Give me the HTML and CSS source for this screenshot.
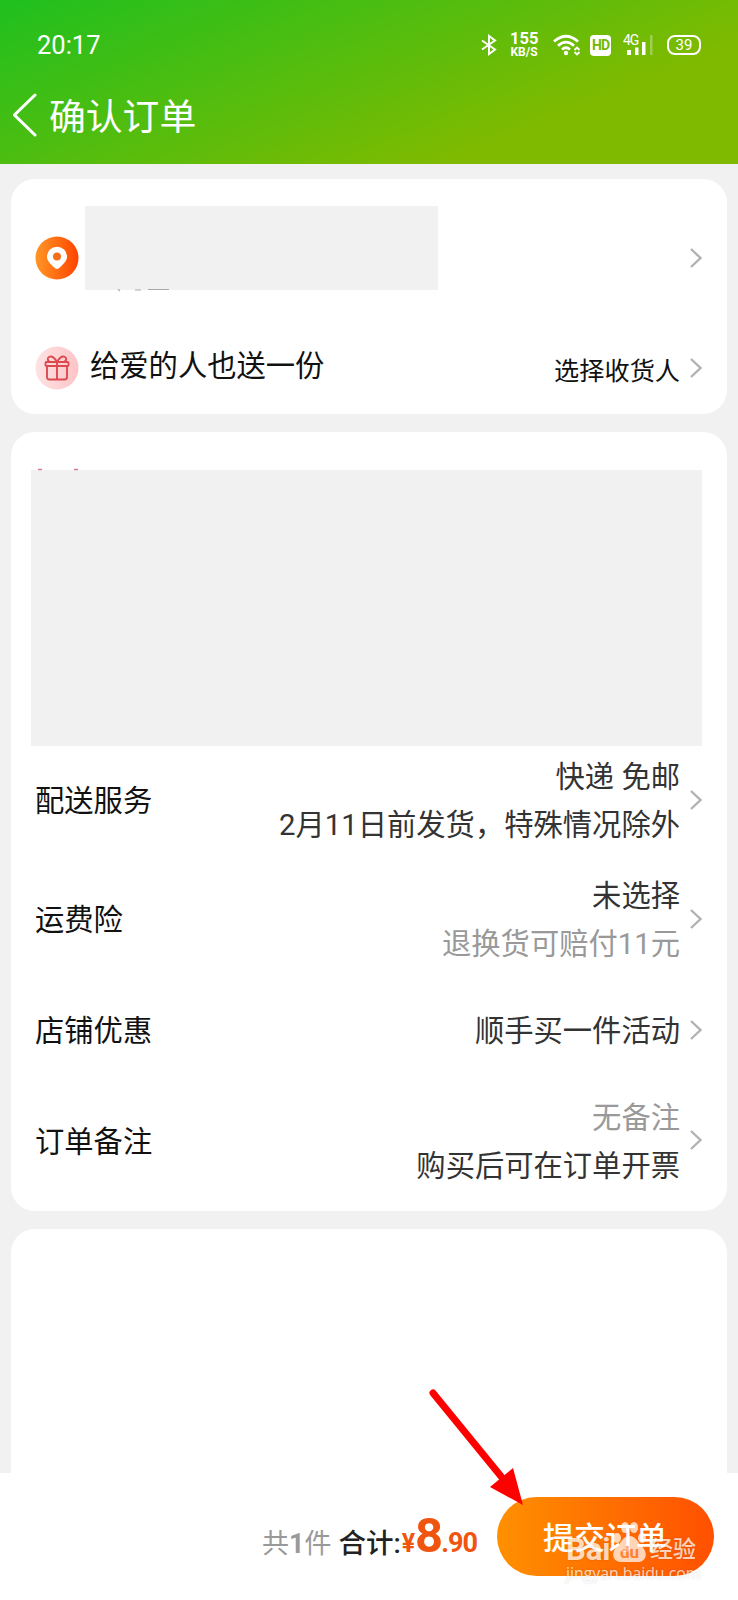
FILE: index.html
```html
<!DOCTYPE html>
<html lang="zh-CN">
<head>
    <meta charset="UTF-8">
    <meta name="viewport" content="width=device-width, initial-scale=1.0">
    <title>确认订单</title>
    <link rel="stylesheet" href="styles.css">
</head>
<body>
    <div class="page">
        <header class="header">
            <div class="status-bar">
                <span class="time">20:17</span>
                <div class="status-icons">
                    <svg class="bluetooth" width="16" height="22" viewBox="0 0 16 22" fill="none" stroke="#fff" stroke-width="2"><path d="M1 6.500l13 9-6 4.500V2L14 6.500 1 15.500"/></svg>
                    <div class="speed"><b>155</b><small>KB/S</small></div>
                    <svg class="wifi" width="28" height="22" viewBox="0 0 28 22" fill="none" stroke="#fff" stroke-width="2.800">
                        <path d="M1 7.500Q13 -3 25 7.500M5 11.800Q13 4.500 21 11.800M9 15.500Q13 12 17 15.500"/>
                        <circle cx="13" cy="19" r="2.200" fill="#fff" stroke="none"/>
                        <path d="M21.500 16l2.500-2.500 2.500 2.500M21.500 18l2.500 2.500 2.500-2.500" stroke-width="1.800"/>
                    </svg>
                    <span class="hd">HD</span>
                    <svg class="signal" width="31" height="26" viewBox="0 -2 31 26">
                        <text x="0" y="10.500" class="signal-text">4G</text>
                        <path d="M4 16h4v5H4zM12 13.500h3.500V21H12zM19 8h3.500v13H19z" fill="#fff"/>
                        <path d="M27 1h2.500v20H27z" fill="#fff" opacity=".3"/>
                    </svg>
                    <span class="battery">39</span>
                </div>
            </div>
            <div class="nav">
                <svg width="24" height="44" viewBox="0 0 24 44" fill="none" stroke="#fff" stroke-width="3" stroke-linecap="round"><path d="M22 2L1.500 22 22 42"/></svg>
                <h1>确认订单</h1>
            </div>
        </header>

        <main class="content">
            <section class="card address-card">
                <div class="address">
                    <svg width="44" height="44" viewBox="0 0 44 44">
                        <defs><linearGradient id="pin"><stop stop-color="#ff9626"/><stop offset="1" stop-color="#ff4400"/></linearGradient></defs>
                        <circle cx="22" cy="22" r="21.500" fill="url(#pin)"/>
                        <path d="M22 33c-1 0-2-.7-3-1.700-4-3.800-7-6.700-7-10.800a10 9.800 0 0 1 20 0c0 4.100-3 7-7 10.800-1 1-2 1.700-3 1.700z" fill="#fff"/>
                        <circle cx="22" cy="20.500" r="4" fill="#f4701c"/>
                    </svg>
                    <div class="mask mask-address">
                        <svg class="residue" width="60" height="3" viewBox="0 0 60 3"><path d="M5 0l2 2M22 1h6M35 .5h21" stroke="#aaa" stroke-width="1.100"/></svg>
                    </div>
                    <svg class="arrow" viewBox="0 0 12 20"><path d="M1 1l9.500 9L1 19"/></svg>
                </div>
                <div class="gift">
                    <svg width="44" height="44" viewBox="0 0 44 44">
                        <defs><linearGradient id="rose"><stop stop-color="#fde3e3"/><stop offset="1" stop-color="#fdc4c6"/></linearGradient></defs>
                        <circle cx="22" cy="22" r="21.500" fill="url(#rose)"/>
                        <g fill="none" stroke="#dc4a50" stroke-width="1.900" stroke-linejoin="round">
                            <rect x="10.500" y="16" width="23" height="4" rx="1"/>
                            <path d="M12 20v11q0 2.500 2.500 2.500h15q2.500 0 2.500-2.500V20M22 16v17.500M22 16c-3-5-6-6-8-5s-1.500 4 1 5M22 16c3-5 6-6 8-5s1.500 4-1 5"/>
                        </g>
                    </svg>
                    <span class="gift-label">给爱的人也送一份</span>
                    <span class="gift-value">选择收货人</span>
                    <svg class="arrow" viewBox="0 0 12 20"><path d="M1 1l9.500 9L1 19"/></svg>
                </div>
            </section>

            <section class="card order-card">
                <div class="mask mask-goods">
                    <svg class="residue" width="44" height="3" viewBox="0 0 44 3"><path d="M1 1.500h4M37 1.500h4" stroke="#d77f90" stroke-width="1.700"/></svg>
                </div>
                <div class="row row-delivery">
                    <span class="label">配送服务</span>
                    <div class="value">快递 免邮<br>2月11日前发货，特殊情况除外</div>
                    <svg class="arrow" viewBox="0 0 12 20"><path d="M1 1l9.500 9L1 19"/></svg>
                </div>
                <div class="row row-insurance">
                    <span class="label">运费险</span>
                    <div class="value">未选择<br><span class="muted">退换货可赔付11元</span></div>
                    <svg class="arrow" viewBox="0 0 12 20"><path d="M1 1l9.500 9L1 19"/></svg>
                </div>
                <div class="row row-discount">
                    <span class="label">店铺优惠</span>
                    <div class="value">顺手买一件活动</div>
                    <svg class="arrow" viewBox="0 0 12 20"><path d="M1 1l9.500 9L1 19"/></svg>
                </div>
                <div class="row row-remark">
                    <span class="label">订单备注</span>
                    <div class="value"><span class="muted">无备注</span><br>购买后可在订单开票</div>
                    <svg class="arrow" viewBox="0 0 12 20"><path d="M1 1l9.500 9L1 19"/></svg>
                </div>
            </section>

            <section class="card empty-card"></section>
        </main>

        <footer class="footer">
            <span class="count">共<b>1</b>件</span>
            <span class="total">合计:</span>
            <span class="price"><span class="yen">¥</span><span class="int">8</span><span class="dec">.90</span></span>
            <button class="submit">提交订单</button>
        </footer>

        <svg class="pointer" width="96" height="120" viewBox="0 0 96 120">
            <path d="M6 6L77 93" stroke="#f00" stroke-width="7" stroke-linecap="round"/>
            <path d="M96 118L63 100 86 81z" fill="#f00"/>
        </svg>

        <div class="watermark">
            <div class="watermark-logo">
                <span class="bai">Bai</span>
                <svg width="35" height="42" viewBox="0 0 34 42" fill="#fff">
                    <ellipse cx="4.500" cy="17" rx="4" ry="5"/><ellipse cx="12.500" cy="6.500" rx="4" ry="5.500"/><ellipse cx="21.500" cy="6.500" rx="4" ry="5.500"/><ellipse cx="29.500" cy="17" rx="4" ry="5"/>
                    <path d="M17 15c6 0 8 6 12 10 7 6 5 16-3 16H8C0 41-2 31 5 25c4-4 6-10 12-10z"/>
                    <text x="7.500" y="37" class="du">du</text>
                </svg>
                <span class="jingyan">经验</span>
            </div>
            <div class="watermark-url">jingyan.baidu.com</div>
        </div>
    </div>
</body>
</html>
```
FILE: styles.css
```css
* {
    box-sizing: border-box;
}
body {
    margin: 0;
    background: #f1f1f1;
    font-family: Roboto, "Noto Sans CJK SC", sans-serif;
    color: #111;
}
.page {
    position: relative;
    display: flex;
    flex-direction: column;
    width: 738px;
    height: 1600px;
    overflow: hidden;
}
svg {
    display: block;
    flex-shrink: 0;
}

/* header */
.header {
    height: 164px;
    flex-shrink: 0;
    background: linear-gradient(158deg, #1fc01f 0%, #7fba00 74%);
    color: #fff;
}
.status-bar {
    display: flex;
    justify-content: space-between;
    align-items: center;
    height: 90px;
    padding: 0 37px 0 37px;
}
.time {
    font-size: 25.5px;
}
.status-icons {
    display: flex;
    align-items: center;
}
.speed {
    width: 28px;
    margin: 0 15px 0 13px;
    text-align: center;
}
.speed b, .speed small {
    display: block;
    font-weight: 700;
    white-space: nowrap;
}
.speed b {
    font-size: 16.5px;
    line-height: 14px;
}
.speed small {
    font-size: 12px;
    line-height: 12px;
}
.hd {
    display: flex;
    justify-content: center;
    width: 21px;
    height: 21px;
    margin: 0 12px 0 9px;
    border-radius: 4px;
    background: #fff;
    color: #72b900;
    font-size: 14px;
    font-weight: 700;
    line-height: 21px;
    letter-spacing: -1px;
}
.signal-text {
    fill: #fff;
    font-size: 14px;
    letter-spacing: -1px;
}
.battery {
    width: 34px;
    height: 20px;
    margin-left: 13px;
    border: 2px solid #fff;
    border-radius: 8px;
    font-size: 15px;
    line-height: 16px;
    text-align: center;
}
.nav {
    display: flex;
    align-items: center;
    height: 50px;
    padding-left: 13px;
}
.nav h1 {
    margin: 0;
    padding: 6px 0 0 12px;
    font-size: 36.8px;
    font-weight: 400;
    line-height: 50px;
}

/* cards */
.content {
    display: flex;
    flex-direction: column;
    gap: 18px;
    height: 1309px;
    padding: 15px 11px 0 11px;
    overflow: hidden;
}
.card {
    flex-shrink: 0;
    border-radius: 24px;
    background: #fff;
}
.address-card {
    height: 235px;
    padding: 27px 25px 0 24px;
}
.order-card {
    height: 779px;
    padding: 38px 25px 0 20px;
}
.empty-card {
    height: 300px;
}
.mask {
    position: relative;
    background: #f1f1f1;
}
.mask-address {
    width: 353px;
    height: 84px;
    margin: 0 auto 0 6px;
}
.mask-goods {
    width: 671px;
    height: 276px;
}
.residue {
    position: absolute;
}
.mask-address .residue {
    left: 28px;
    top: 83px;
}
.mask-goods .residue {
    left: 6px;
    top: -2px;
}
.arrow {
    width: 12px;
    height: 20px;
    margin-left: 10px;
    fill: none;
    stroke: #b2b2b2;
    stroke-width: 2.4;
}
.address, .gift {
    display: flex;
    align-items: center;
}
.address {
    height: 103px;
    padding-bottom: 19px;
}
.address > svg {
    margin-top: 19px;
}
.gift {
    height: 44px;
    margin-top: 37px;
}
.gift-label {
    margin: -4px auto 0 11px;
    font-size: 29.3px;
    line-height: 44px;
}
.gift-value {
    padding-top: 2px;
    font-size: 25.2px;
}

/* order rows */
.row {
    display: flex;
    align-items: center;
    justify-content: space-between;
    padding-left: 4px;
    font-size: 29.3px;
    line-height: 48px;
}
.row-delivery {
    height: 107px;
}
.row-insurance {
    height: 131px;
}
.row-discount {
    height: 91px;
}
.row-remark {
    height: 130px;
}
.label, .value {
    padding-top: 3px;
}
.value {
    margin-left: auto;
    color: #333;
    text-align: right;
}
.muted {
    color: #999;
}

/* bottom bar */
.footer {
    display: flex;
    align-items: center;
    justify-content: flex-end;
    height: 127px;
    padding: 0 24px 0 0;
    background: #fff;
}
.count, .total {
    padding-top: 14px;
    font-size: 27.5px;
    line-height: 40px;
}
.count {
    margin-right: 7px;
    font-size: 27px;
    color: #999;
}
.total {
    font-weight: 500;
    color: #222;
}
.price {
    display: flex;
    align-items: baseline;
    margin: 0 20px 0 1px;
    padding-bottom: 2px;
    color: #f0550f;
    font-weight: 700;
}
.yen {
    font-size: 25px;
}
.int {
    font-size: 49px;
    letter-spacing: -2px;
}
.dec {
    font-size: 27px;
    letter-spacing: -1px;
}
.submit {
    width: 217px;
    height: 79px;
    padding: 0 1px 3px 0;
    border: none;
    border-radius: 40px;
    background: linear-gradient(90deg, #ff9000, #ff5000);
    color: #fff;
    font-family: inherit;
    font-size: 31px;
    font-weight: 500;
}

/* overlays */
.pointer {
    position: absolute;
    left: 427px;
    top: 1387px;
}
.watermark {
    position: absolute;
    left: 566px;
    top: 1521px;
    width: 140px;
    color: #fff;
    opacity: 0.72;
    text-shadow: 0 0 2px rgba(0, 0, 0, 0.25);
}
.watermark-logo {
    display: flex;
    align-items: flex-end;
    height: 42px;
}
.bai {
    width: 46px;
    font-size: 31px;
    font-weight: 700;
    line-height: 27px;
}
.du {
    fill: #ff8a45;
    font-size: 17px;
    font-weight: 700;
    text-shadow: none;
}
.jingyan {
    margin-left: 3px;
    font-size: 23px;
    font-weight: 500;
    line-height: 26px;
}
.watermark-url {
    font-family: "Open Sans", sans-serif;
    font-size: 15.8px;
    line-height: 20px;
}
```
